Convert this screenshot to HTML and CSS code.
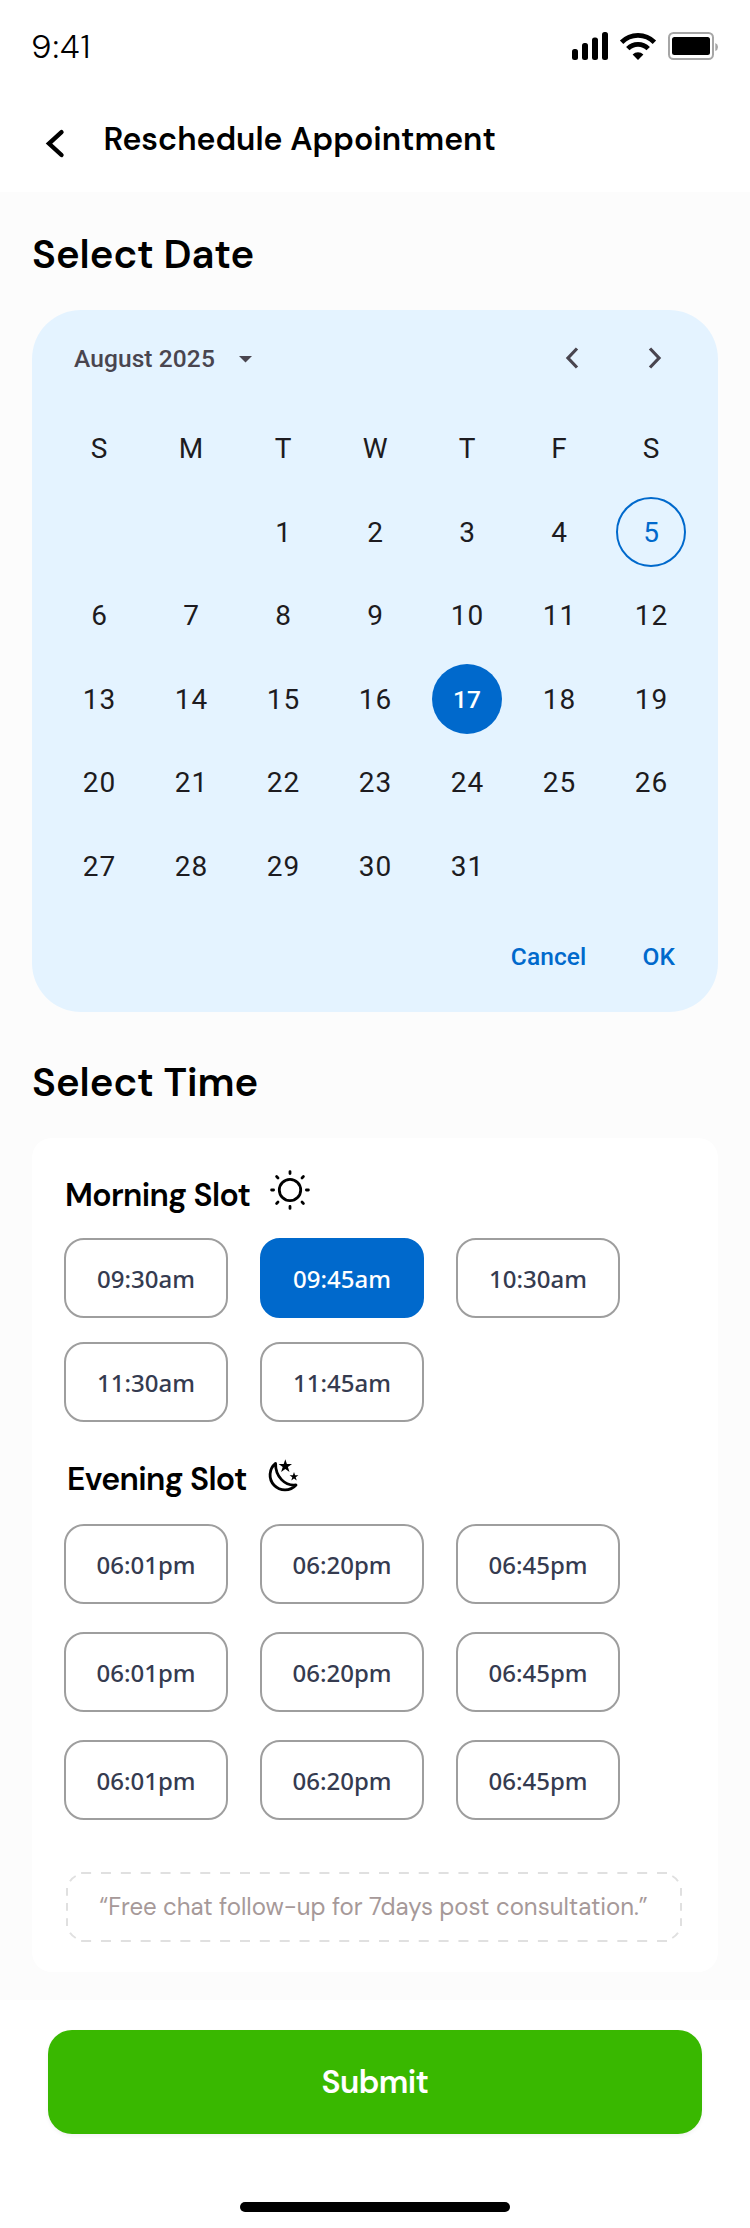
FILE: index.html
```html
<!DOCTYPE html>
<html lang="en">
<head>
<meta charset="utf-8">
<title>Reschedule Appointment</title>
<link rel="stylesheet" href="styles.css">
</head>
<body>
<header class="top">
  <div class="status">
    <span class="clock">9:41</span>
    <svg class="status-icons" width="148" height="28" viewBox="0 0 148 28">
      <rect x="0" y="17" width="6" height="11" rx="2.5"/>
      <rect x="10" y="11" width="6" height="17" rx="2.5"/>
      <rect x="20" y="5.5" width="6" height="22.5" rx="2.5"/>
      <rect x="30" y="0" width="6" height="28" rx="2.5"/>
      <g fill="none" stroke="#000" stroke-width="4.8">
        <path d="M49.6 10.2A23 23 0 0 1 82.4 10.2"/>
        <path d="M55.8 16.6A14.5 14.5 0 0 1 76.2 16.6"/>
      </g>
      <path d="M66 28 60.6 22.4A7.8 7.8 0 0 1 71.4 22.4Z"/>
      <rect x="97" y="1" width="44" height="26" rx="4.5" fill="none" stroke="#a6a6a6" stroke-width="2"/>
      <rect x="100" y="5" width="38" height="18" rx="2.5"/>
      <path d="M143.3 11Q146 12 146 15T143.3 19Z" fill="#a6a6a6"/>
    </svg>
  </div>
  <div class="nav">
    <svg class="back" width="20" height="30" viewBox="0 0 20 30"><path d="M16.5 3.2 4 14.5 16.5 26" fill="none" stroke="#000" stroke-width="4.4" stroke-linecap="round"/></svg>
    <h1 class="title">Reschedule Appointment</h1>
  </div>
</header>
<main class="content">
  <h2 class="section date-title">Select Date</h2>
  <section class="calendar">
    <div class="month-row">
      <span class="month">August 2025</span>
      <svg class="caret" width="13" height="7" viewBox="0 0 13 7"><path d="M0 0H13L6.5 6.5Z" fill="#49454f"/></svg>
      <svg class="chev" width="14" height="22" viewBox="0 0 14 22"><path d="M12 1.5 3 11 12 20.5" fill="none" stroke="#49454f" stroke-width="3.2"/></svg>
      <svg class="chev" width="14" height="22" viewBox="0 0 14 22"><path d="M2 1.5 11 11 2 20.5" fill="none" stroke="#49454f" stroke-width="3.2"/></svg>
    </div>
    <div class="days">
      <span>S</span><span>M</span><span>T</span><span>W</span><span>T</span><span>F</span><span>S</span>
      <span></span><span></span><span>1</span><span>2</span><span>3</span><span>4</span><span class="mark"><b class="today">5</b></span>
      <span>6</span><span>7</span><span>8</span><span>9</span><span>10</span><span>11</span><span>12</span>
      <span>13</span><span>14</span><span>15</span><span>16</span><span class="mark"><b class="picked">17</b></span><span>18</span><span>19</span>
      <span>20</span><span>21</span><span>22</span><span>23</span><span>24</span><span>25</span><span>26</span>
      <span>27</span><span>28</span><span>29</span><span>30</span><span>31</span>
    </div>
    <div class="actions"><span class="cancel">Cancel</span><span class="ok">OK</span></div>
  </section>
  <h2 class="section time-title">Select Time</h2>
  <section class="slots">
    <div class="slot-head">
      <h3 class="morning">Morning Slot</h3>
      <svg class="sun" width="40" height="40" viewBox="0 0 40 40" fill="none" stroke="#000" stroke-width="2.8">
        <circle cx="20" cy="20" r="10.7"/>
        <path stroke-linecap="round" d="M20 1.6V3.6M20 36.4V38.4M1.6 20H3.6M36.4 20H38.4M6.6 6.6 8 8M32 32 33.4 33.4M6.6 33.4 8 32M32 8 33.4 6.6"/>
      </svg>
    </div>
    <div class="grid am">
      <span class="slot">09:30am</span><span class="slot active">09:45am</span><span class="slot">10:30am</span>
      <span class="slot">11:30am</span><span class="slot">11:45am</span>
    </div>
    <div class="slot-head eve">
      <h3 class="evening">Evening Slot</h3>
      <svg class="moon" width="36" height="36" viewBox="0 0 36 36">
        <path d="M10.6 5.4A14.9 14.9 0 1 0 31 27C20 28.3 10.2 18.5 10.6 5.4Z" fill="none" stroke="#000" stroke-width="2.8" stroke-linejoin="round"/>
        <path d="M20.3 1.2 21.9 6.1H27L22.9 9.1 24.5 14 20.3 11 16.1 14 17.7 9.1 13.6 6.1H18.7Z"/>
        <path d="M29 14 30.1 17.3H33.4L30.7 19.3 31.7 22.5 29 20.5 26.3 22.5 27.3 19.3 24.6 17.3H27.9Z"/>
      </svg>
    </div>
    <div class="grid pm">
      <span class="slot">06:01pm</span><span class="slot">06:20pm</span><span class="slot">06:45pm</span>
      <span class="slot">06:01pm</span><span class="slot">06:20pm</span><span class="slot">06:45pm</span>
      <span class="slot">06:01pm</span><span class="slot">06:20pm</span><span class="slot">06:45pm</span>
    </div>
    <div class="note">
      <svg class="dashes" width="616" height="70" viewBox="0 0 616 70" fill="none" stroke="#e0e0e0" stroke-width="2">
        <path stroke-dasharray="10 9.86" d="M15.1 1H601M15.1 69H601"/>
        <path stroke-dasharray="7.7 7.4" d="M1 16V54M615 16V54"/>
        <path d="M4 9.2Q6.2 6 9.7 4M4 60.8Q6.2 64 9.7 66M612 9.2Q609.8 6 606.3 4M612 60.8Q609.8 64 606.3 66"/>
      </svg>
      <span class="note-text">“Free chat follow-up for 7days post consultation.”</span>
    </div>
  </section>
</main>
<footer class="bottom">
  <button class="submit">Submit</button>
  <div class="home"></div>
</footer>
</body>
</html>
```

FILE: styles.css
```css
* { box-sizing: border-box; margin: 0; padding: 0; }
body { width: 750px; height: 2228px; background: #fff; color: #000; font-family: "DM Sans", Lato, "Open Sans", sans-serif; font-optical-sizing: none; }
svg { display: block; flex: none; }
h1, h2, h3 { font-weight: 600; white-space: nowrap; }

.top { height: 192px; }
.status { height: 92px; padding: 0 30px 0 31px; display: flex; justify-content: space-between; align-items: center; }
.clock { font: 300 32.5px/40px "DM Sans", "Open Sans", sans-serif; letter-spacing: 1.2px; padding-top: 2px; }
.nav { display: flex; padding: 26px 0 0 45px; }
.back { margin-top: 11px; }
.title { margin-left: 38.5px; font-size: 32px; line-height: 43px; }

.content { height: 1808px; background: #fcfcfc; padding: 36px 32px 0; }
.section { font-size: 40px; line-height: 52px; }

.calendar { margin-top: 30px; height: 702px; border-radius: 49px; background: #e4f3ff; padding: 20px 21px 0; font-family: Roboto, sans-serif; }
.month-row { height: 56px; padding: 0 35.5px 0 21px; display: flex; align-items: center; color: #49454f; }
.month { font-size: 24.5px; font-weight: 500; letter-spacing: 0.1px; }
.caret { margin: 2px auto 0 24px; }
.chev + .chev { margin-left: 69px; }
.days { display: grid; grid-template-columns: repeat(7, 92px); grid-auto-rows: 83.5px; margin-top: 21px; font-size: 28px; letter-spacing: 0.9px; color: #1d1b20; }
.days span { display: flex; align-items: center; justify-content: center; padding-left: 1px; }
.days .mark { padding-left: 0; }
.today, .picked { width: 70px; height: 70px; border-radius: 50%; display: flex; align-items: center; justify-content: center; font-weight: 400; padding-left: 1px; }
.today { border: 2px solid #0069cc; color: #0069cc; }
.picked { background: #0069cc; color: #fff; font-size: 24.5px; font-weight: 500; letter-spacing: 0.17px; padding-left: 0; }
.actions { display: flex; justify-content: flex-end; gap: 56px; padding: 34px 22px 0 0; font-size: 24.5px; font-weight: 500; line-height: 30px; color: #0069cc; letter-spacing: 0.1px; }

.time-title { margin-top: 44px; }
.slots { margin-top: 30px; height: 834px; background: #fff; border-radius: 20px; padding: 32px 32px 0; }
.slot-head { display: flex; height: 68px; padding-left: 1px; font-size: 32px; line-height: 40px; }
.slot-head h3 { width: 185px; font-size: 32px; line-height: 50px; letter-spacing: -0.64px; }
.sun { margin-left: 20px; }
.grid { display: grid; grid-template-columns: repeat(3, 164px); grid-auto-rows: 80px; column-gap: 32px; }
.am { row-gap: 24px; }
.pm { row-gap: 28px; }
.slot { display: flex; align-items: center; justify-content: center; border: 2px solid #9e9e9e; border-radius: 20px; font: 500 24px/32px "Noto Sans", sans-serif; color: #353b50; padding-top: 2px; }
.active { background: #0069cc; border-color: #0069cc; color: #fff; }
.slot-head.eve { height: 102px; padding: 32px 0 0 3px; }
.moon { margin: 4px 0 0 13px; }
.note { position: relative; width: 616px; height: 70px; margin: 52px 0 0 2px; display: flex; align-items: center; justify-content: center; }
.dashes { position: absolute; inset: 0; }
.note-text { font-size: 24px; font-weight: 400; line-height: 30px; color: #a69999; white-space: nowrap; margin: -1px 1px 0 0; }

.bottom { height: 228px; padding: 30px 48px 0; }
.submit { display: block; width: 654px; height: 104px; border: 0; border-radius: 24px; background: #39b800; color: #fff; font: 600 32px "DM Sans", Lato, sans-serif; letter-spacing: -0.64px; box-shadow: 0 2px 4px rgba(0,0,0,0.05); }
.home { width: 270px; height: 10px; border-radius: 5px; background: #000; margin: 68px auto 0; }
```
